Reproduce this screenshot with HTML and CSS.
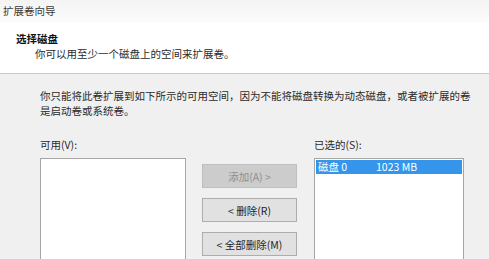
FILE: index.html
```html
<!DOCTYPE html>
<html lang="zh-CN">
<head>
<meta charset="utf-8">
<link rel="stylesheet" href="styles.css">
</head>
<body>
<div class="window">
  <div class="titlebar">扩展卷向导</div>
  <div class="header">
    <div class="h-title">选择磁盘</div>
    <div class="h-sub">你可以用至少一个磁盘上的空间来扩展卷。</div>
  </div>
  <div class="content">
    <p class="desc">你只能将此卷扩展到如下所示的可用空间，因为不能将磁盘转换为动态磁盘，或者被扩展的卷是启动卷或系统卷。</p>
    <div class="picker">
      <div class="label">可用(V):</div>
      <div></div>
      <div class="label">已选的(S):</div>
      <div class="list"></div>
      <div class="buttons">
        <div class="btn disabled">添加(A) &gt;</div>
        <div class="btn">&lt; 删除(R)</div>
        <div class="btn">&lt; 全部删除(M)</div>
      </div>
      <div class="list">
        <div class="item selected"><span class="disk">磁盘 0</span><span class="size">1023 MB</span></div>
      </div>
    </div>
  </div>
</div>
</body>
</html>
```

FILE: styles.css
```css
html, body {
  margin: 0;
  padding: 0;
}
body {
  width: 489px;
  height: 259px;
  overflow: hidden;
  background: #f0f0f0;
  font-family: "Noto Sans CJK SC", "Noto Sans", sans-serif;
  font-size: 10.5px;
  color: #1e1e1e;
}
.window {
  width: 489px;
  height: 259px;
  overflow: hidden;
}
.titlebar {
  height: 22px;
  line-height: 22px;
  padding-left: 3px;
  color: #3a3a3a;
  background: linear-gradient(#f4f4f4, #fbfbfb);
}
.header {
  background: #ffffff;
  padding: 10px 0 12px 16px;
  border-bottom: 1px solid #c9c9c9;
}
.h-title {
  font-weight: bold;
  line-height: 14px;
  color: #111;
}
.h-sub {
  margin-top: 1px;
  padding-left: 19px;
  line-height: 14px;
  color: #2a2a2a;
}
.content {
  padding: 14px 12px 0 40px;
}
.desc {
  margin: 0;
  line-height: 15px;
  color: #2a2a2a;
}
.picker {
  margin-top: 20px;
  display: grid;
  grid-template-columns: 146px 96px 150px;
  column-gap: 16px;
  grid-template-rows: 14px auto;
  row-gap: 6px;
}
.label {
  line-height: 14px;
  color: #2a2a2a;
}
.list {
  height: 110px;
  background: #ffffff;
  border: 1px solid #a6a6a6;
  box-sizing: border-box;
  padding: 1px;
}
.buttons {
  padding-top: 6px;
  display: flex;
  flex-direction: column;
  gap: 10px;
}
.btn {
  width: 95px;
  height: 24px;
  box-sizing: border-box;
  border: 1px solid #adadad;
  background: #e1e1e1;
  display: flex;
  align-items: center;
  justify-content: center;
  color: #1e1e1e;
}
.btn.disabled {
  background: #cccccc;
  border-color: #bfbfbf;
  color: #8e8e8e;
}
.item {
  height: 14px;
  line-height: 14px;
  display: flex;
  color: #ffffff;
}
.item.selected {
  background: #3595ea;
}
.disk {
  width: 58px;
  padding-left: 2px;
}
```
